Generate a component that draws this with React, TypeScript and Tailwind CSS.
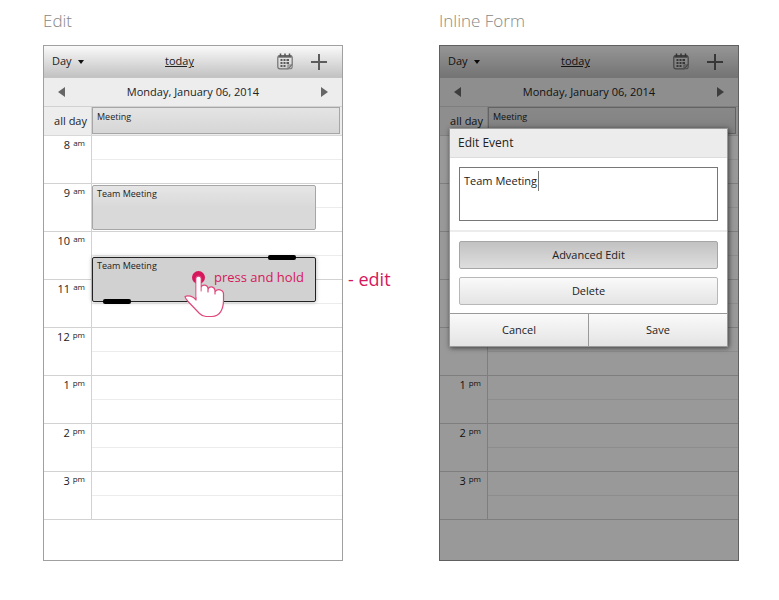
import React from "react";

const HOURS = ["8 am", "9 am", "10 am", "11 am", "12 pm", "1 pm", "2 pm", "3 pm"];

function CalendarIcon() {
  return (
    <svg width="16" height="17" viewBox="0 0 16 17" fill="none" aria-hidden="true">
      <path d="M3 2.500H13Q15.200 2.500 15.200 4.800V11.500L11 15.800H3Q0.800 15.800 0.800 13.500V4.800Q0.800 2.500 3 2.500Z" stroke="#707070" strokeWidth="1.200" />
      <path d="M15.200 11V13.500Q15.200 15.800 13 15.800H10.500M11 15.500V12H15" stroke="#808080" strokeWidth="1.100" />
      <path d="M1.500 3.600h13" stroke="#666" strokeWidth="2.200" />
      <path d="M3.500 0.500v3M8 0.500v3M12.500 0.500v3" stroke="#555" strokeWidth="1.500" />
      <path d="M3.500 6h2v2h-2zM6.500 6h2v2h-2zM9.500 6h2.500v2h-2.500zM3.500 9h2v2h-2zM6.500 9h2v2h-2zM9.500 9h2.500v2h-2.500zM3.500 12h2v2h-2zM6.500 12h2v2h-2z" fill="#5a5a5a" />
    </svg>
  );
}

function PlusIcon() {
  return (
    <svg width="16" height="16" viewBox="0 0 16 16" aria-hidden="true">
      <path d="M8 0v16M0 8h16" stroke="#5c5c5c" strokeWidth="2" />
    </svg>
  );
}

function HoldMarker() {
  return (
    <svg width="42" height="56" viewBox="0 0 42 56" aria-hidden="true">
      <circle cx="14.500" cy="14.500" r="6.500" fill="#d6175c" />
      <path
        d="M12 37V15.500C12 12.300 17 12.300 17 15.500V28V25C17 21 23.500 21 24 25.500V29V26.500C25 22.500 30.500 23 31 27.500V31V29C33 25 39.500 26.500 39.500 31V37C39.500 46 36 53.500 28 53.500H22C19.500 53.500 17.500 52.500 15.500 50.500L4.500 39C3 37 1 35 1 33.500C4 32 9 33 12 37Z"
        fill="#fff"
        stroke="#e0477c"
        strokeWidth="1.200"
        strokeLinejoin="round"
      />
      <path d="M12.600 34V15.500C12.600 13.500 16.400 13.500 16.400 15.500V34z" fill="#fff" />
    </svg>
  );
}

function HourRow({ label }: { label: string }) {
  const [hour, half] = label.split(" ");
  return (
    <div className="flex h-12 border-b border-[#d2d2d2]">
      <div className="flex w-[47px] shrink-0 items-start justify-end gap-[3px] pt-px pr-1.5 leading-4">
        <span>{hour}</span>
        <span className="text-[8px] leading-3">{half}</span>
      </div>
      <div className="flex-1 border-l border-[#d2d2d2]">
        <div className="h-6 border-b border-[#ececec]" />
      </div>
    </div>
  );
}

function DayView({ children }: { children?: React.ReactNode }) {
  return (
    <div className="relative border border-[#a0a0a0] bg-white text-[11px] text-[#222]">
      <div className="flex h-8 items-center justify-between border-b border-[#c4c4c4] bg-linear-to-b from-[#fafafa] to-[#c2c2c2] pr-[15px] pl-2">
        <button type="button" className="flex w-[50px] items-center gap-1.5">
          Day
          <svg width="6" height="4" viewBox="0 0 6 4" aria-hidden="true">
            <path d="M0 0h6L3 4z" fill="#111" />
          </svg>
        </button>
        <a href="#today" className="pr-5"><span className="underline">today</span></a>
        <div className="flex items-center gap-[18px]">
          <button type="button" aria-label="Calendar"><CalendarIcon /></button>
          <button type="button" aria-label="Add"><PlusIcon /></button>
        </div>
      </div>
      <div className="flex h-[29px] items-center justify-between border-b border-[#d2d2d2] bg-[#ededed] px-3.5">
        <button type="button" aria-label="Previous day">
          <svg width="7" height="10" viewBox="0 0 7 10" aria-hidden="true"><path d="M7 0v10L0 5z" fill="#666" /></svg>
        </button>
        <span>Monday, January 06, 2014</span>
        <button type="button" aria-label="Next day">
          <svg width="7" height="10" viewBox="0 0 7 10" aria-hidden="true"><path d="M0 0v10l7-5z" fill="#666" /></svg>
        </button>
      </div>
      <div className="flex h-[29px] border-b border-[#d8d8d8] bg-[#ededed]">
        <div className="flex w-[47px] shrink-0 items-center justify-end pr-1">all day</div>
        <div className="flex-1 border-l border-[#d2d2d2] pr-0.5 pb-px">
          <div className="h-full border border-[#a6a6a6] bg-linear-to-b from-[#e4e4e4] to-[#d6d6d6] pl-1 text-[9px] leading-[18px]">Meeting</div>
        </div>
      </div>
      <div className="relative">
        {HOURS.map((h) => <HourRow key={h} label={h} />)}
        <div className="absolute top-[49px] right-[26px] left-12 h-[45px] rounded-[2px] border border-[#a6a6a6] bg-linear-to-b from-[#e6e6e6] to-[#d9d9d9] to-50% pl-1 text-[9px] leading-4">
          Team Meeting
        </div>
        <div className="absolute top-[121px] right-[26px] left-12 h-[45px] rounded-[2px] border border-[#222] bg-[#d1d1d1] pl-1 text-[9px] leading-4 shadow-[0_0_4px_rgba(0,0,0,0.3)]">
          Team Meeting
          <span className="absolute -top-[3px] right-[19px] h-[5px] w-7 rounded-[2px] bg-black" />
          <span className="absolute -bottom-[3px] left-2.5 h-[5px] w-7 rounded-[2px] bg-black" />
        </div>
      </div>
      <div className="h-10" />
      {children}
    </div>
  );
}

function EditEventForm() {
  return (
    <div role="dialog" aria-label="Edit Event" className="absolute top-[82px] right-2.5 left-[9px] border border-[#999] bg-white shadow-[1px_1px_5px_rgba(0,0,0,0.6)]">
      <h2 className="border-b border-[#dcdcdc] bg-[#ececec] px-2 text-[12px] leading-7">Edit Event</h2>
      <div className="border-b-2 border-[#ececec] px-[9px] py-[9px]">
        <div className="relative h-[54px]">
          <textarea aria-label="Event title" defaultValue="Team Meeting" className="block h-full w-full resize-none border border-[#777] px-1 py-1 leading-[18px] outline-none" />
          <span className="absolute top-1 left-[79px] h-5 w-px bg-[#777]" />
        </div>
      </div>
      <div className="flex flex-col gap-2 px-[9px] pt-[9px] pb-2">
        <button type="button" className="h-7 rounded-[2px] border border-[#a6a6a6] bg-linear-to-b from-[#c2c2c2] to-[#dedede]">Advanced Edit</button>
        <button type="button" className="h-7 rounded-[2px] border border-[#b8b8b8] bg-linear-to-b from-[#fafafa] to-[#e4e4e4]">Delete</button>
      </div>
      <div className="flex h-[33px] border-t border-[#999] bg-linear-to-b from-[#fafafa] to-[#e4e4e4]">
        <button type="button" className="flex-1">Cancel</button>
        <button type="button" className="flex-1 border-l border-[#999]">Save</button>
      </div>
    </div>
  );
}

export default function App() {
  return (
    <main className="grid min-h-screen grid-cols-2 content-start gap-x-24 bg-white pt-2 pr-10 pb-10 pl-[43px] font-['Open_Sans','Noto_Sans',sans-serif]">
      <section className="relative">
        <h1 className="pb-3 text-[17px] leading-[25px] font-light text-[#888]">Edit</h1>
        <DayView />
        <div className="absolute top-[255px] left-[141px] text-[#d6175c]">
          <HoldMarker />
          <span className="absolute top-1.5 left-[30px] text-[13px] leading-4 whitespace-nowrap">press and hold</span>
          <span className="absolute top-1.5 left-[164px] text-[18px] leading-5 whitespace-nowrap">- edit</span>
        </div>
      </section>
      <section>
        <h1 className="pb-3 text-[17px] leading-[25px] font-light text-[#888]">Inline Form</h1>
        <DayView>
          <div className="absolute -inset-px bg-black/40" />
          <EditEventForm />
        </DayView>
      </section>
    </main>
  );
}
